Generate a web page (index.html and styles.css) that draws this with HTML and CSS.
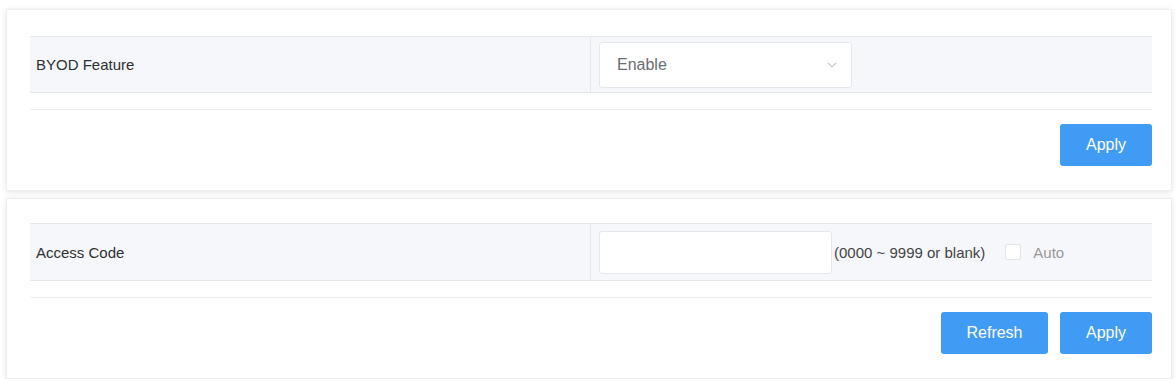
FILE: index.html
```html
<!DOCTYPE html>
<html>
<head>
<meta charset="utf-8">
<link rel="stylesheet" href="styles.css">
</head>
<body>
<div class="page">
  <section class="card card-first">
    <div class="row">
      <div class="label">BYOD Feature</div>
      <div class="value">
        <div class="select">
          <span class="select-text">Enable</span>
          <svg class="chevron" width="10" height="6" viewBox="0 0 10 6"><path d="M1 1 L5 5 L9 1" fill="none" stroke="#c6c9cf" stroke-width="1.1"/></svg>
        </div>
      </div>
    </div>
    <div class="divider"></div>
    <div class="actions">
      <button class="btn btn-apply">Apply</button>
    </div>
  </section>
  <section class="card">
    <div class="row row-tall">
      <div class="label">Access Code</div>
      <div class="value">
        <div class="input"></div>
        <span class="hint">(0000 ~ 9999 or blank)</span>
        <span class="checkbox"></span>
        <span class="auto">Auto</span>
      </div>
    </div>
    <div class="divider"></div>
    <div class="actions">
      <button class="btn btn-refresh">Refresh</button>
      <button class="btn btn-apply">Apply</button>
    </div>
  </section>
</div>
</body>
</html>
```

FILE: styles.css
```css
html, body {
  margin: 0;
  padding: 0;
  background: #ffffff;
  font-family: "Liberation Sans", Arial, sans-serif;
}
.page {
  padding: 9px 4px 0 6px;
  display: flex;
  flex-direction: column;
  gap: 7px;
}
.card {
  background: #fff;
  border: 1px solid #eeeeee;
  box-shadow: 0 1px 6px rgba(0, 0, 0, 0.1);
  padding: 24px 19px 24px 23px;
}
.card-first {
  padding-top: 26px;
}
.row {
  display: grid;
  grid-template-columns: 560px 1fr;
  height: 57px;
  box-sizing: border-box;
  background: #f5f7fa;
  border-top: 1px solid #e6e8ec;
  border-bottom: 1px solid #e6e8ec;
}
.row-tall {
  height: 58px;
}
.label {
  display: flex;
  align-items: center;
  padding-left: 6px;
  font-size: 15px;
  color: #2f3033;
}
.value {
  display: flex;
  align-items: center;
  border-left: 1px solid #e6e8ec;
  padding-left: 8px;
}
.select {
  width: 253px;
  height: 46px;
  box-sizing: border-box;
  background: #fff;
  border: 1px solid #e4e7ed;
  border-radius: 3px;
  display: flex;
  align-items: center;
  justify-content: space-between;
  padding: 0 14px 0 17px;
}
.select-text {
  font-size: 16px;
  color: #6b6d72;
}
.input {
  width: 233px;
  height: 43px;
  box-sizing: border-box;
  background: #fff;
  border: 1px solid #e4e7ed;
  border-radius: 3px;
}
.hint {
  margin-left: 2px;
  font-size: 15px;
  color: #444;
}
.checkbox {
  width: 16px;
  height: 16px;
  box-sizing: border-box;
  margin-left: 20px;
  background: #fff;
  border: 1px solid #e2e4e8;
  border-radius: 2px;
}
.auto {
  margin-left: 12px;
  font-size: 15px;
  color: #999;
}
.divider {
  border-top: 1px solid #eceef2;
  margin-top: 16px;
}
.actions {
  display: flex;
  justify-content: flex-end;
  gap: 12px;
  margin-top: 14px;
}
.btn {
  height: 42px;
  border: none;
  border-radius: 3px;
  background: #3f9bf3;
  color: #fff;
  font-family: "Liberation Sans", Arial, sans-serif;
  font-size: 16px;
  padding: 0;
}
.btn-apply {
  width: 92px;
}
.btn-refresh {
  width: 107px;
}
```
